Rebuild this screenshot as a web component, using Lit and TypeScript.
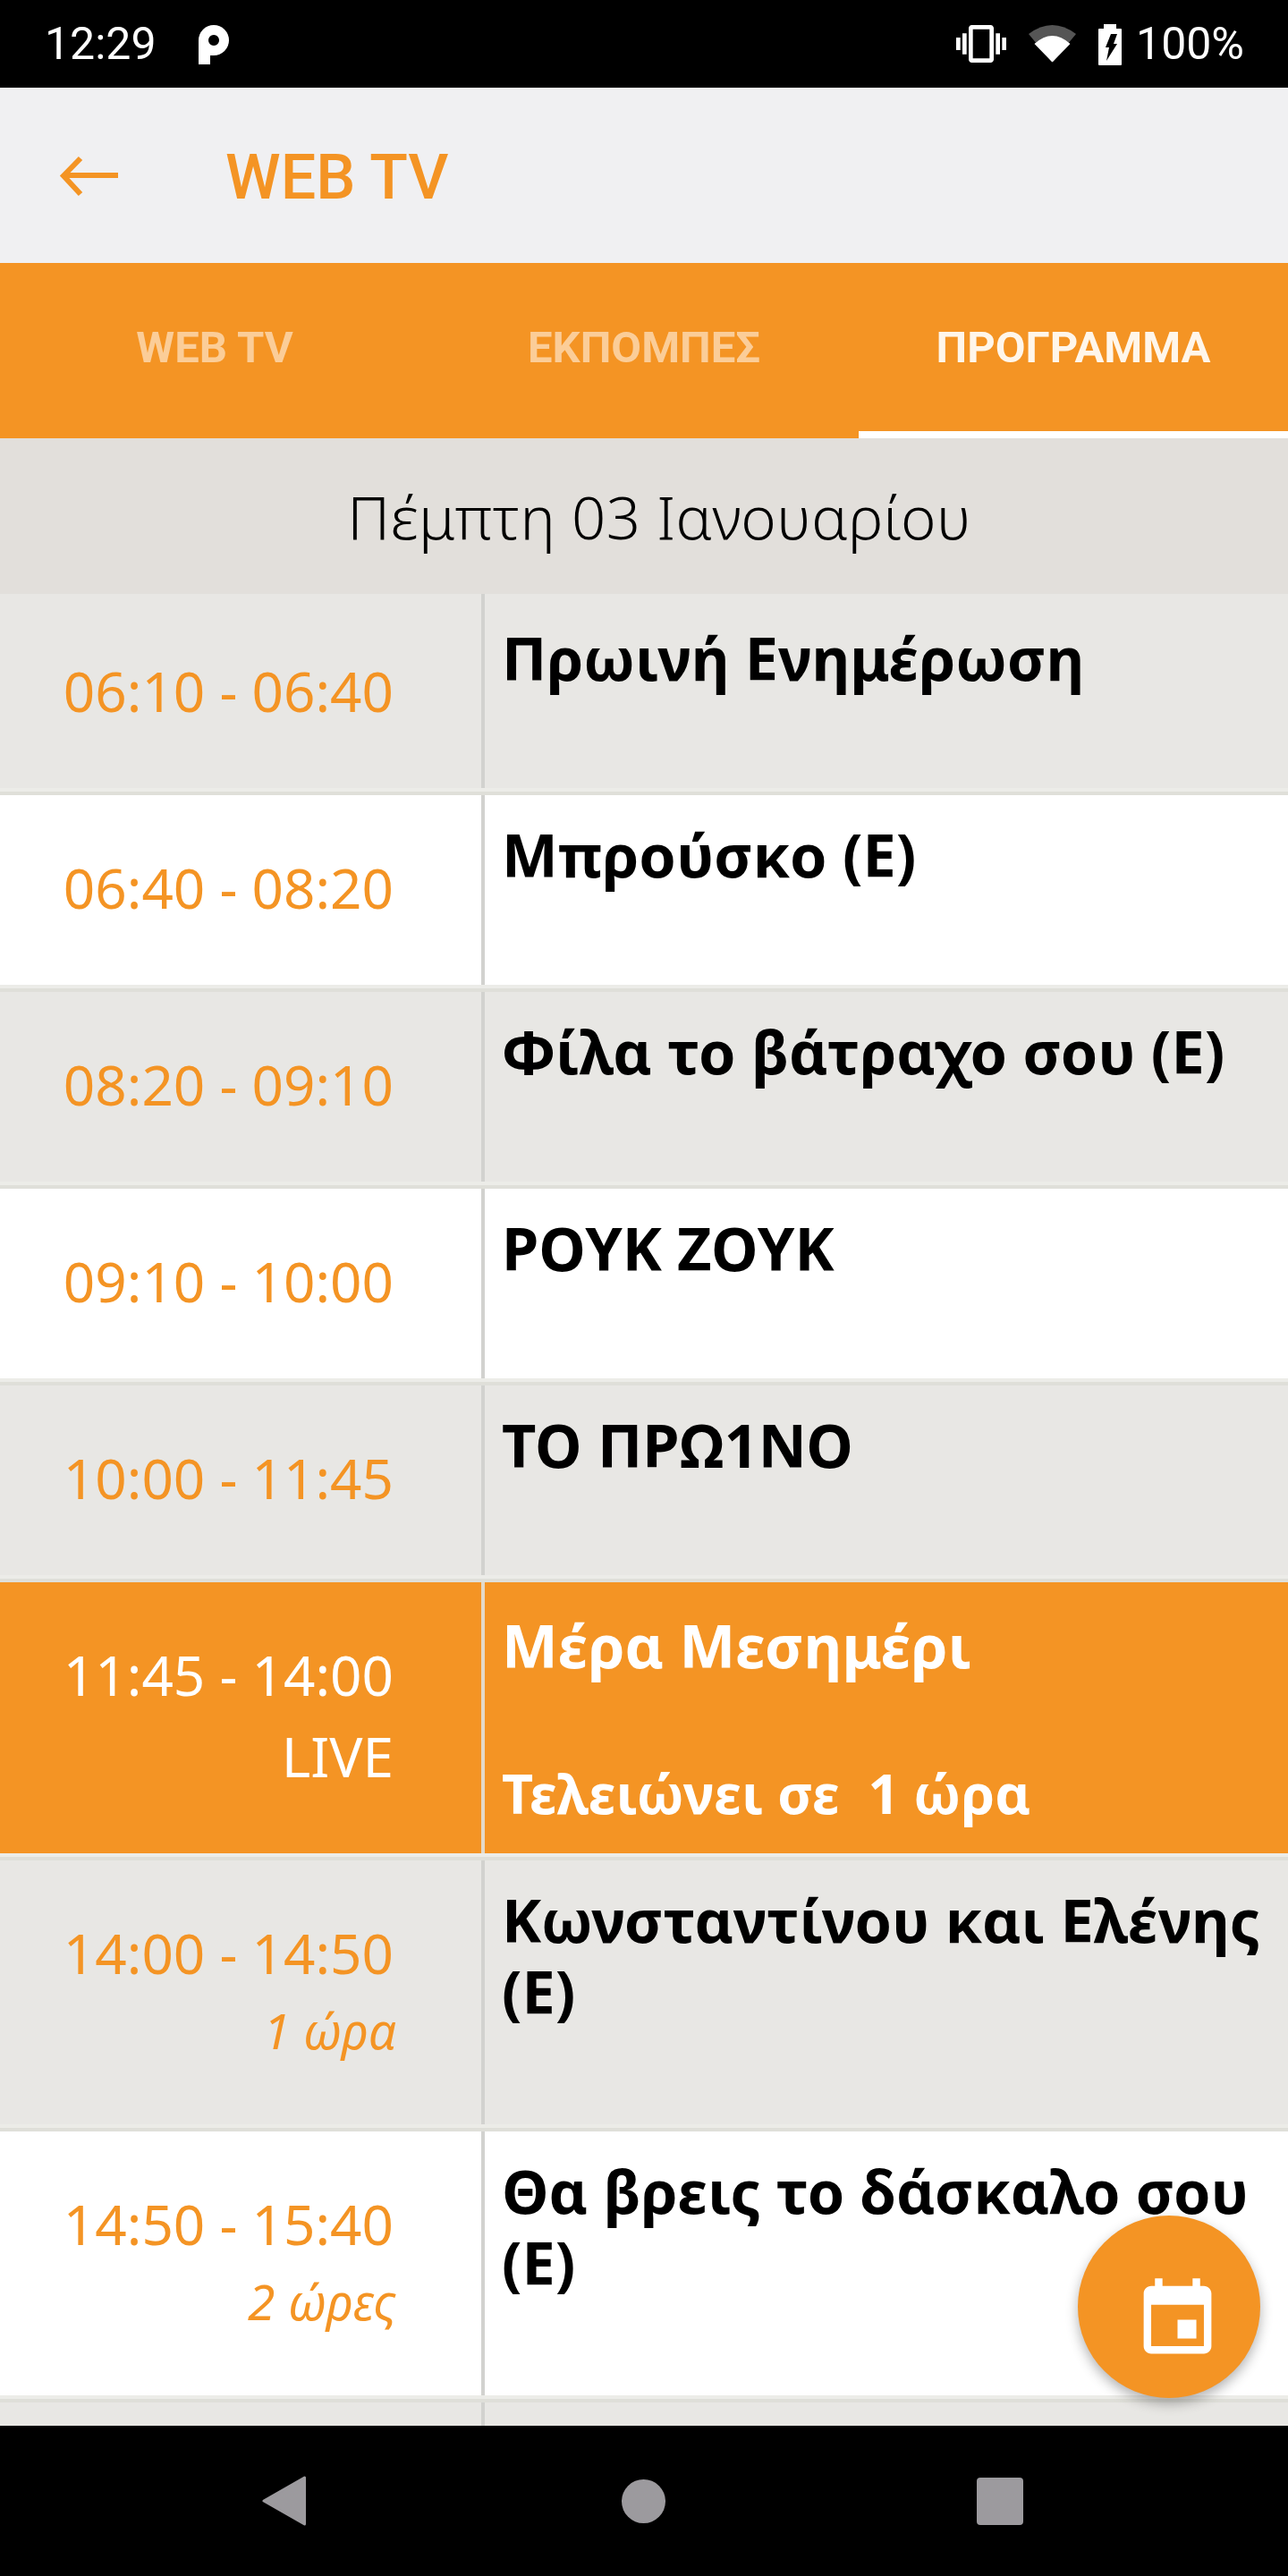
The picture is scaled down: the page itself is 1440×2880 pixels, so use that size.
import { LitElement, html, css } from "lit";
import { customElement } from "lit/decorators.js";

type Row = { time: string; title: string; kind: "grey" | "white" | "live"; note?: string; sub?: string; tall?: boolean };

const rows: Row[] = [
  { time: "06:10 - 06:40", title: "Πρωινή Ενημέρωση", kind: "grey" },
  { time: "06:40 - 08:20", title: "Μπρούσκο (Ε)", kind: "white" },
  { time: "08:20 - 09:10", title: "Φίλα το βάτραχο σου (Ε)", kind: "grey" },
  { time: "09:10 - 10:00", title: "ΡΟΥΚ ΖΟΥΚ", kind: "white" },
  { time: "10:00 - 11:45", title: "ΤΟ ΠΡΩ1ΝΟ", kind: "grey" },
  { time: "11:45 - 14:00", title: "Μέρα Μεσημέρι", kind: "live", sub: "Τελειώνει σε  1 ώρα", tall: true },
  { time: "14:00 - 14:50", title: "Κωνσταντίνου και Ελένης (Ε)", kind: "grey", note: "1 ώρα", tall: true },
  { time: "14:50 - 15:40", title: "Θα βρεις το δάσκαλο σου (Ε)", kind: "white", note: "2 ώρες", tall: true },
];

@customElement("app-root")
export class AppRoot extends LitElement {
  static styles = css`
    :host { display: flex; flex-direction: column; position: relative; width: 1440px; height: 2880px; overflow: hidden; background: #000; font-family: "Noto Sans", sans-serif; }
    .status { height: 98px; flex: none; background: #000; color: #fff; display: flex; align-items: center; padding: 0 49px 0 50px; box-sizing: border-box; font: 400 50px Roboto, sans-serif; }
    .status svg { display: block; flex: none; }
    .p { margin-left: 47px; margin-top: 2px; }
    .spacer { flex: 1; }
    .wifi { margin-left: 25px; }
    .batt { margin-left: 25px; margin-top: 2px; }
    .pct { margin-left: 16px; }
    .appbar { height: 196px; flex: none; background: #f0f0f2; display: flex; align-items: center; padding: 4px 0 0 66px; box-sizing: border-box; color: #f49424; font: 500 70px Roboto, sans-serif; }
    .appbar svg { display: block; margin-right: 120px; margin-top: -2px; }
    .tabs { height: 196px; flex: none; background: #f49424; display: flex; font: 700 49px Roboto, sans-serif; color: #fbcd98; }
    .tab { flex: 1; display: flex; align-items: center; justify-content: center; border-bottom: 8px solid transparent; box-sizing: border-box; }
    .tab.on { color: #fff6ea; border-bottom-color: #fff; }
    .date { height: 174px; flex: none; background: #e2dfdb; color: #000; display: flex; align-items: center; justify-content: center; padding-left: 34px; box-sizing: border-box; font-size: 67px; font-weight: 300; letter-spacing: 0.4px; }
    .list { flex: 1; min-height: 0; overflow: hidden; background: #e8e7e4; }
    .row { display: flex; height: 212px; }
    .row.tall { height: 295px; }
    .row.live { height: 303px; }
    .row.first { height: 217px; }
    .grey { background: #e8e7e4; }
    .white { background: #fff; }
    .live { background: #f49424; }
    .time { width: 538px; flex: none; box-sizing: border-box; padding: 68px 98px 0 0; text-align: right; color: #f49424; font-size: 62px; line-height: 70px; font-weight: 400; }
    .first .time { padding-top: 73px; }
    .live .time, .live .title, .live .sub { color: #fff; }
    .live-tag { margin-top: 21px; }
    .note { margin-top: 17px; font-size: 55px; font-style: italic; margin-right: -3px; }
    .body { flex: 1; min-width: 0; border-left: 4px solid #d2d2cf; padding: 26px 10px 0 19px; }
    .first .body { padding-top: 31px; }
    .live .body { border-left-color: #e4d9c8; padding-top: 30px; }
    .title { font-size: 66.5px; line-height: 80px; font-weight: 700; color: #000; }
    .sub { font-size: 61px; line-height: 80px; font-weight: 700; margin-top: 86px; white-space: pre; }
    .sep { height: 4px; background: #ecece8; border-bottom: 4px solid #dfdfd9; }
    .nav { height: 168px; flex: none; background: #000; position: relative; display: flex; }
    .nav svg { display: block; }
    .nav .items { display: flex; align-items: center; padding: 0 0 0 293px; height: 168px; }
    .tri { margin-right: 353px; }
    .dot { margin-right: 348px; }
    .fab { position: absolute; left: 1205px; top: 2477px; width: 204px; height: 204px; border-radius: 50%; background: #f49424; box-shadow: 0 6px 14px rgba(0,0,0,.3); display: flex; align-items: center; justify-content: center; padding: 28px 0 0 18px; box-sizing: border-box; }
    .fab svg { display: block; }
  `;

  render() {
    return html`
      <div class="status">
        <span>12:29</span>
        <svg class="p" width="34" height="44" viewBox="0 0 34 44"><path fill="#fff" fill-rule="evenodd" d="M0 17A17 17 0 1 1 17 34H13V44H0ZM17 11a6 6 0 1 0 0.01 0Z"/></svg>
        <span class="spacer"></span>
        <svg width="56" height="56" viewBox="0 0 24 24"><path fill="#fff" d="M0 15h2V9H0v6zm3 2h2V7H3v10zm19-8v6h2V9h-2zm-3 8h2V7h-2v10zM16.5 3h-9C6.67 3 6 3.67 6 4.5v15c0 .83.67 1.5 1.5 1.5h9c.83 0 1.5-.67 1.5-1.5v-15c0-.83-.67-1.5-1.5-1.5zM16 19H8V5h8v14z"/></svg>
        <svg class="wifi" width="53" height="42" viewBox="0 0 53 42"><path fill="#555" d="M0 10Q26.5-10 53 10L26.5 42Z"/><path fill="#fff" d="M6.5 21Q26.5 3 46.5 21L28 40Q26.5 42 25 40Z"/></svg>
        <svg class="batt" width="26" height="46" viewBox="0 0 26 46"><path fill="#fff" d="M6 0H20V5H25Q26 5 26 6V45Q26 46 25 46H1Q0 46 0 45V6Q0 5 1 5H6Z"/><path fill="#000" d="M14 11H21L17 22H21L9 41L12 26H8Z"/></svg>
        <span class="pct">100%</span>
      </div>
      <div class="appbar">
        <svg width="66" height="46" viewBox="0 0 66 46"><path fill="none" stroke="#f49424" stroke-width="6" d="M66 22H6M24 3L5 22.500L24 43"/></svg>
        <span>WEB TV</span>
      </div>
      <div class="tabs">
        <div class="tab">WEB TV</div>
        <div class="tab">ΕΚΠΟΜΠΕΣ</div>
        <div class="tab on">ΠΡΟΓΡΑΜΜΑ</div>
      </div>
      <div class="date">Πέμπτη 03 Ιανουαρίου</div>
      <div class="list">
        ${rows.map((r, i) => html`
          <div class="row ${r.kind} ${r.tall ? "tall" : ""} ${i === 0 ? "first" : ""}">
            <div class="time">
              <div>${r.time}</div>
              ${r.kind === "live" ? html`<div class="live-tag">LIVE</div>` : ""}
              ${r.note ? html`<div class="note">${r.note}</div>` : ""}
            </div>
            <div class="body">
              <div class="title">${r.title}</div>
              ${r.sub ? html`<div class="sub">${r.sub}</div>` : ""}
            </div>
          </div>
          <div class="sep"></div>
        `)}
        <div class="row grey"><div class="time"></div><div class="body"></div></div>
      </div>
      <div class="nav">
        <div class="items">
          <svg class="tri" width="49" height="56" viewBox="0 0 49 56"><path fill="#9c9a9e" stroke="#9c9a9e" stroke-width="3" stroke-linejoin="round" d="M47.500 2V54L2 28Z"/></svg>
          <svg class="dot" width="49" height="49" viewBox="0 0 49 49"><circle cx="24.500" cy="24.500" r="24.500" fill="#9c9a9e"/></svg>
          <svg width="52" height="53" viewBox="0 0 52 53"><rect width="52" height="53" rx="4" fill="#9c9a9e"/></svg>
        </div>
      </div>
      <div class="fab">
        <svg width="101" height="101" viewBox="0 0 24 24"><path fill="#fff" d="M17 12h-5v5h5v-5zM16 1v2H8V1H6v2H5c-1.110 0-1.990.9-1.990 2L3 19c0 1.100.89 2 2 2h14c1.100 0 2-.9 2-2V5c0-1.100-.9-2-2-2h-1V1h-2zm3 18H5V8h14v11z"/></svg>
      </div>
    `;
  }
}
